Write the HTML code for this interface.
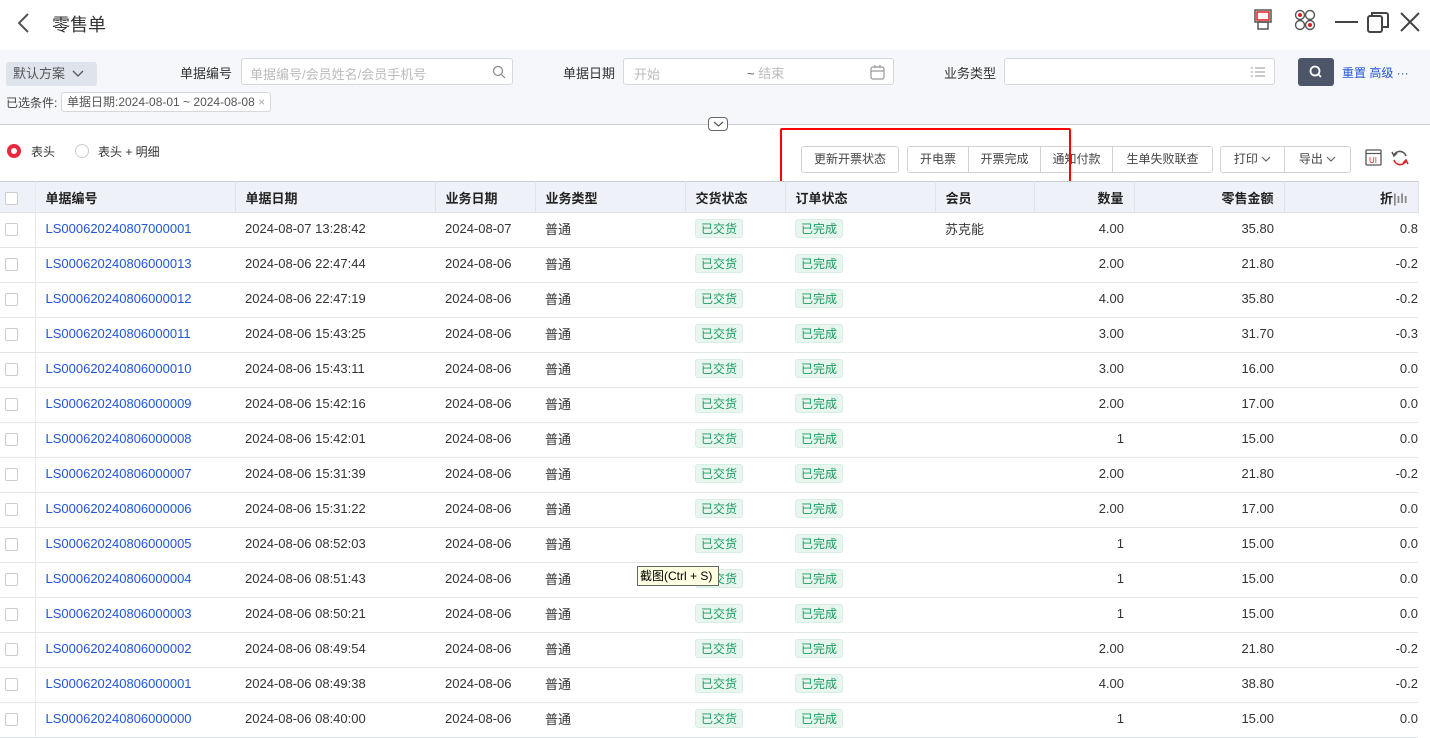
<!DOCTYPE html>
<html><head><meta charset="utf-8"><style>
*{box-sizing:border-box;margin:0;padding:0}
body{width:1430px;height:710px;overflow:hidden;background:#fff;font-family:"Liberation Sans","Noto Sans CJK SC",sans-serif;color:#333;position:relative;font-size:13px}
.a{position:absolute}
.inp{position:absolute;border:1px solid #d4d7de;border-radius:3px;background:#fff;height:27px;top:58px}
.ph{color:#bbb;font-size:13px}
.lbl{font-size:13px;color:#333}
.btn{position:absolute;top:146px;height:27px;border:1px solid #cfd2d8;border-radius:3px;background:#fff;font-size:12px;color:#444;display:flex;align-items:center}
.btn span{display:inline-block;text-align:center;height:100%;line-height:25px;border-right:1px solid #cfd2d8}
.btn span:last-child{border-right:none}
table{position:absolute;left:0;top:181px;border-collapse:collapse;table-layout:fixed;width:1418px}
th{height:31px;background:#eef1f7;font-weight:bold;text-align:left;padding-left:10px;border-right:1px solid #dde1e8;border-top:1px solid #c9ccd2;border-bottom:1px solid #dde1e8;font-size:13px;color:#222}
td{height:35px;padding-left:10px;border-bottom:1px solid #e2e5ea;font-size:13px;color:#333;white-space:nowrap;overflow:hidden;padding-bottom:3px}
td.r,th.r{text-align:right;padding-right:10px;padding-left:0}
td.lk{color:#2156d8}
.cb{display:inline-block;width:13px;height:13px;border:1px solid #ccc;border-radius:2px;background:#fff;vertical-align:middle}
.tag{display:inline-block;height:19px;line-height:19px;padding:0 5px;background:#e8f6ef;border:1px solid #d6efe2;color:#1a9d60;font-size:12px;border-radius:3px}
td.c0,th.c0{padding-left:5px;border-right:1px solid #e6e8ee}
</style></head><body>
<svg class="a" style="left:14px;top:12px" width="18" height="22"><path d="M14 2 L5 11 L14 20" fill="none" stroke="#555" stroke-width="2"/></svg>
<div class="a" style="left:52px;top:11px;font-size:18px;color:#333">零售单</div>
<svg class="a" style="left:1253px;top:9px" width="20" height="22"><rect x="2" y="1" width="16" height="12" fill="none" stroke="#555" stroke-width="1.5"/><rect x="4" y="3" width="12" height="8" fill="none" stroke="#e02020" stroke-width="1.5"/><rect x="5" y="13" width="10" height="7" fill="none" stroke="#555" stroke-width="1.5"/></svg>
<svg class="a" style="left:1294px;top:9px" width="22" height="22"><circle cx="6" cy="6" r="4.5" fill="none" stroke="#555" stroke-width="1.4"/><circle cx="6" cy="6" r="2" fill="#e02020"/><circle cx="16" cy="6" r="4.5" fill="none" stroke="#555" stroke-width="1.4"/><circle cx="6" cy="16" r="4.5" fill="none" stroke="#555" stroke-width="1.4"/><circle cx="16" cy="16" r="4.5" fill="none" stroke="#555" stroke-width="1.4"/><circle cx="16" cy="16" r="2" fill="#e02020"/></svg>
<div class="a" style="left:1335px;top:21px;width:23px;height:2px;background:#444"></div>
<svg class="a" style="left:1366px;top:10px" width="24" height="24"><rect x="2" y="6" width="14" height="16" rx="2" fill="none" stroke="#444" stroke-width="2"/><path d="M6 6 V3 H20 a2 2 0 0 1 2 2 V17 H16" fill="none" stroke="#444" stroke-width="2"/></svg>
<svg class="a" style="left:1399px;top:11px" width="22" height="22"><path d="M2 2 L20 20 M20 2 L2 20" stroke="#444" stroke-width="2"/></svg>
<div class="a" style="left:0;top:50px;width:1430px;height:75px;background:#f6f7fb;border-bottom:1px solid #d0d3da"></div>
<div class="a" style="left:6px;top:62px;width:91px;height:24px;background:#dfe3ec;border-radius:3px;font-size:13px;color:#555;line-height:24px;padding-left:7px">默认方案 <svg width="12" height="8" style="margin-left:3px"><path d="M1 1 L6 6 L11 1" fill="none" stroke="#555" stroke-width="1.3"/></svg></div>
<div class="a lbl" style="left:180px;top:63px">单据编号</div>
<div class="inp" style="left:241px;width:272px"><span class="ph a" style="left:8px;top:5px">单据编号/会员姓名/会员手机号</span><svg class="a" style="left:250px;top:6px" width="14" height="14"><circle cx="6" cy="6" r="4.5" fill="none" stroke="#888" stroke-width="1.2"/><path d="M9.5 9.5 L13 13" stroke="#888" stroke-width="1.2"/></svg></div>
<div class="a lbl" style="left:563px;top:63px">单据日期</div>
<div class="inp" style="left:623px;width:271px"><span class="ph a" style="left:10px;top:5px">开始</span><span class="a" style="left:123px;top:4px;color:#555">~ <span class="ph">结束</span></span><svg class="a" style="left:246px;top:6px" width="15" height="15"><rect x="1" y="2" width="13" height="12" rx="2" fill="none" stroke="#999" stroke-width="1.2"/><path d="M1 6 H14 M5 0 V3 M10 0 V3" stroke="#999" stroke-width="1.2"/></svg></div>
<div class="a lbl" style="left:944px;top:63px">业务类型</div>
<div class="inp" style="left:1004px;width:271px"><svg class="a" style="left:246px;top:8px" width="14" height="11"><path d="M0 1H2M4 1H14M0 5H2M4 5H14M0 9H2M4 9H14" stroke="#aaa" stroke-width="1.2"/></svg></div>
<div class="a" style="left:1298px;top:58px;width:36px;height:28px;background:#4d5568;border-radius:3px"><svg class="a" style="left:11px;top:7px" width="14" height="14"><circle cx="6" cy="6" r="4.5" fill="none" stroke="#fff" stroke-width="1.8"/><path d="M9.5 9.5 L12 12" stroke="#fff" stroke-width="1.8"/></svg></div>
<div class="a" style="left:1342px;top:64px;font-size:12px;color:#2156d8">重置 高级 ···</div>
<div class="a" style="left:6px;top:94px;font-size:12px;color:#444">已选条件:</div>
<div class="a" style="left:61px;top:92px;height:20px;border:1px solid #d4d7de;border-radius:3px;background:#fff;font-size:12px;color:#555;line-height:18px;padding:0 5px">单据日期:2024-08-01 ~ 2024-08-08 <span style="color:#aaa">×</span></div>
<div class="a" style="left:708px;top:117px;width:20px;height:14px;border:1px solid #666;border-radius:4px;background:#fff"><svg class="a" style="left:4px;top:3px" width="11" height="7"><path d="M1 1 L5.5 5 L10 1" fill="none" stroke="#555" stroke-width="1.2"/></svg></div>
<div class="a" style="left:7px;top:144px;width:14px;height:14px;border-radius:50%;border:4px solid #e8283c"></div>
<div class="a" style="left:31px;top:143px;font-size:12px">表头</div>
<div class="a" style="left:75px;top:144px;width:14px;height:14px;border-radius:50%;border:1px solid #ccc"></div>
<div class="a" style="left:98px;top:143px;font-size:12px">表头 + 明细</div>
<div class="btn" style="left:801px;width:98px"><span style="width:96px">更新开票状态</span></div>
<div class="btn" style="left:907px;width:306px"><span style="width:61px">开电票</span><span style="width:72px">开票完成</span><span style="width:72px">通知付款</span><span style="width:99px">生单失败联查</span></div>
<div class="btn" style="left:1220px;width:131px"><span style="width:64px">打印 <svg width="10" height="7"><path d="M1 1 L5 5 L9 1" fill="none" stroke="#666" stroke-width="1.2"/></svg></span><span style="width:65px">导出 <svg width="10" height="7"><path d="M1 1 L5 5 L9 1" fill="none" stroke="#666" stroke-width="1.2"/></svg></span></div>
<svg class="a" style="left:1365px;top:149px" width="17" height="17"><rect x="1" y="1" width="15" height="15" rx="1" fill="none" stroke="#555" stroke-width="1.3"/><path d="M1 4.5H16" stroke="#555" stroke-width="1.2"/><text x="4" y="14" font-size="8" fill="#e02020" font-family="Liberation Sans">UI</text></svg>
<svg class="a" style="left:1391px;top:149px" width="18" height="18"><path d="M15 7 A6.5 6.5 0 0 0 3 6" fill="none" stroke="#555" stroke-width="1.6"/><path d="M3 11 A6.5 6.5 0 0 0 15 12" fill="none" stroke="#e02020" stroke-width="1.6"/><path d="M1 3 L3 7 L6 4" fill="none" stroke="#555" stroke-width="1.5"/><path d="M17 15 L15 11 L12 14" fill="none" stroke="#e02020" stroke-width="1.5"/></svg>
<div class="a" style="left:780px;top:128px;width:291px;height:57px;border:2px solid #f00;border-radius:2px"></div>
<table>
<colgroup><col style="width:35px"><col style="width:200px"><col style="width:200px"><col style="width:100px"><col style="width:150px"><col style="width:100px"><col style="width:150px"><col style="width:99px"><col style="width:100px"><col style="width:150px"><col style="width:134px"></colgroup>
<tr><th class="c0" style="height:30px"><span class="cb"></span></th><th>单据编号</th><th>单据日期</th><th>业务日期</th><th>业务类型</th><th>交货状态</th><th>订单状态</th><th>会员</th><th class="r">数量</th><th class="r">零售金额</th><th class="r">折<span style="color:#888">|ılı</span></th></tr>
<tbody id="tb"></tbody>
</table>
<div class="a" style="left:637px;top:566px;width:82px;height:20px;border:1px solid #666;background:#ffffe1;font-size:12px;color:#000;line-height:18px;padding-left:2px">截图(Ctrl + S)</div>
<script>
var d=[["07000001","07 13:28:42","苏克能","4.00","35.80","0.8"],["06000013","06 22:47:44","","2.00","21.80","-0.2"],["06000012","06 22:47:19","","4.00","35.80","-0.2"],["06000011","06 15:43:25","","3.00","31.70","-0.3"],["06000010","06 15:43:11","","3.00","16.00","0.0"],["06000009","06 15:42:16","","2.00","17.00","0.0"],["06000008","06 15:42:01","","1","15.00","0.0"],["06000007","06 15:31:39","","2.00","21.80","-0.2"],["06000006","06 15:31:22","","2.00","17.00","0.0"],["06000005","06 08:52:03","","1","15.00","0.0"],["06000004","06 08:51:43","","1","15.00","0.0"],["06000003","06 08:50:21","","1","15.00","0.0"],["06000002","06 08:49:54","","2.00","21.80","-0.2"],["06000001","06 08:49:38","","4.00","38.80","-0.2"],["06000000","06 08:40:00","","1","15.00","0.0"]];
var h="";d.forEach(function(r){var dd=r[1].slice(0,2);h+='<tr><td class="c0"><span class="cb"></span></td><td class="lk">LS0006202408'+r[0]+'</td><td>2024-08-'+r[1]+'</td><td>2024-08-'+dd+'</td><td>普通</td><td><span class="tag">已交货</span></td><td><span class="tag">已完成</span></td><td>'+r[2]+'</td><td class="r">'+r[3]+'</td><td class="r">'+r[4]+'</td><td class="r" style="padding-right:0">'+r[5]+'</td></tr>'});document.getElementById("tb").innerHTML=h;
</script>
</body></html>
